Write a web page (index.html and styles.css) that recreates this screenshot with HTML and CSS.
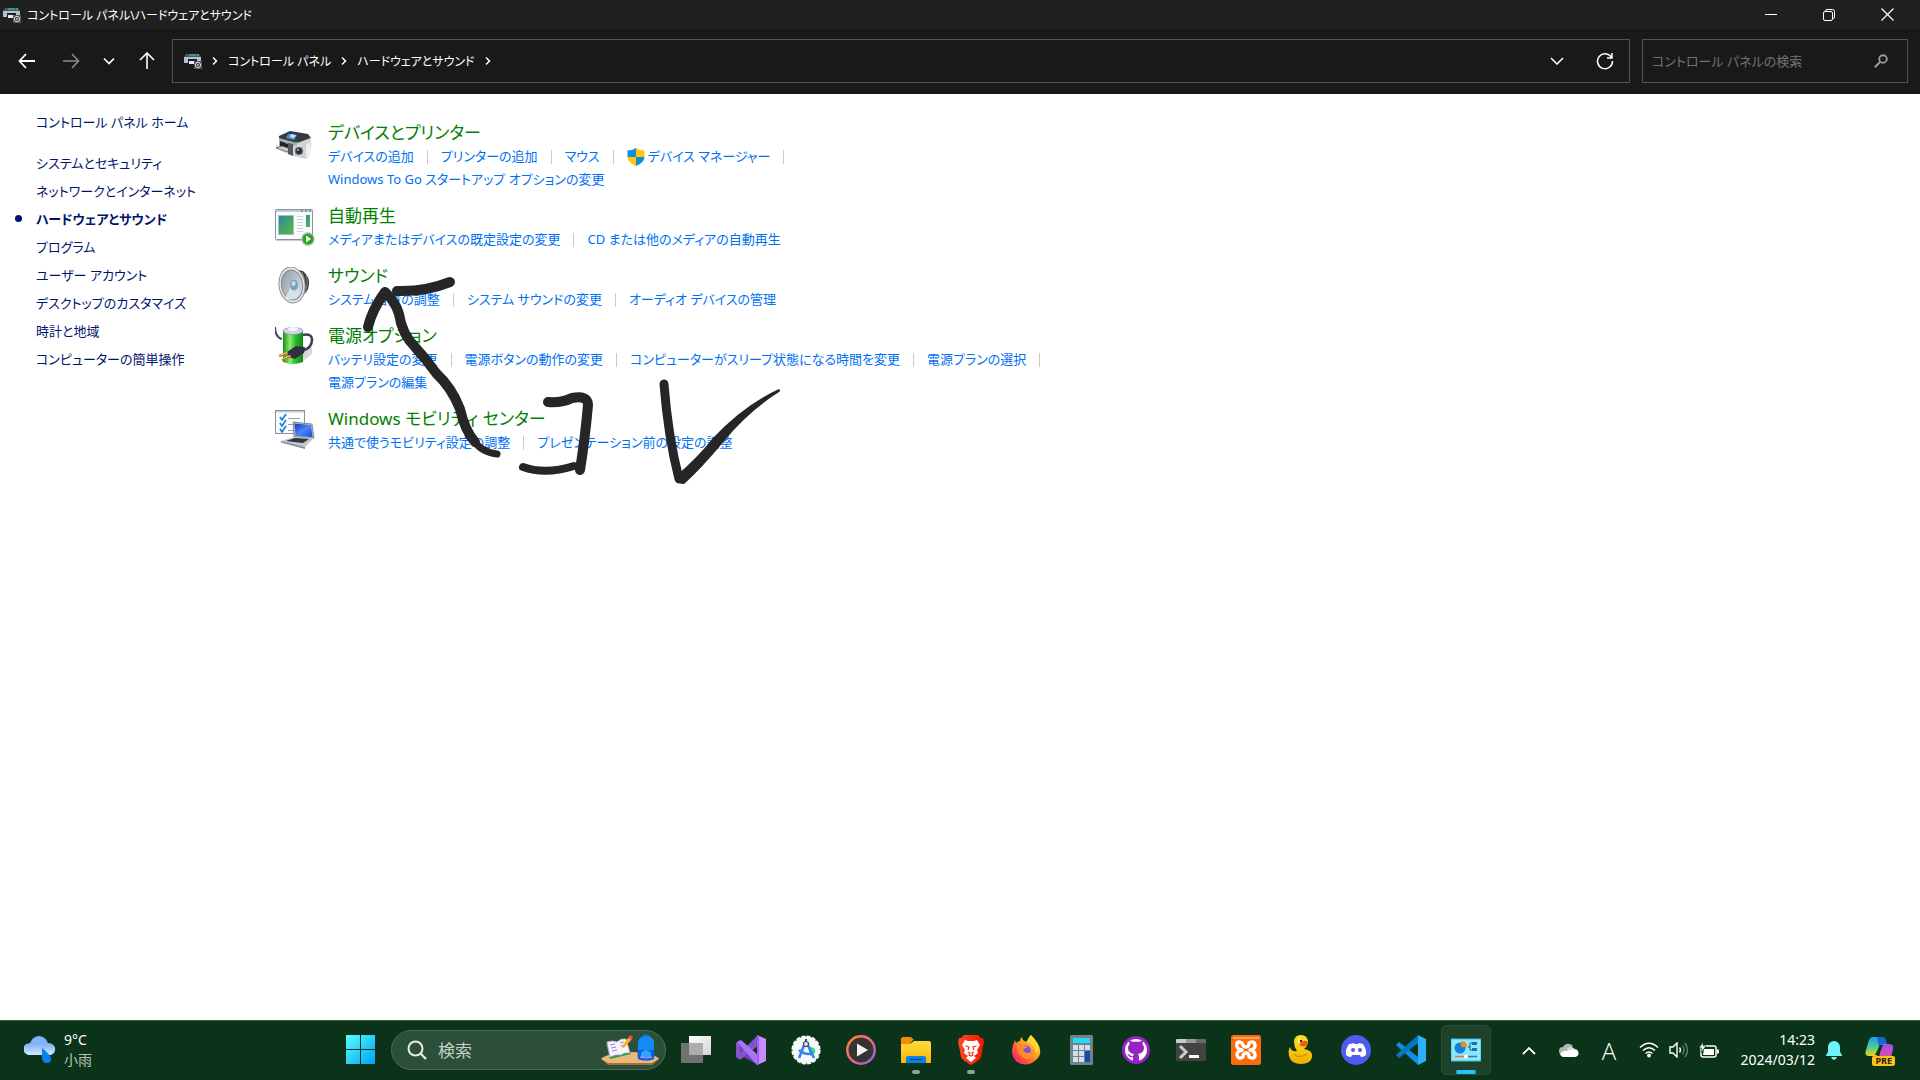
FILE: index.html
```html
<!DOCTYPE html>
<html lang="ja">
<head>
    <meta charset="UTF-8">
    <meta name="viewport" content="width=device-width, initial-scale=1.0">
    <title>コントロール パネル\ハードウェアとサウンド</title>

    <link rel="stylesheet" href="styles.css">
</head>

<body>
    <!-- 共通で使うグラデーションとアイコン -->
    <svg class="defs" width="0" height="0" aria-hidden="true">
      <defs>
        <linearGradient id="g-win" x1="0" y1="0" x2="1" y2="1"><stop offset="0" stop-color="#5ff"/><stop offset="1" stop-color="#00a2f5"/></linearGradient>
        <linearGradient id="g-screen" x1="0" y1="0" x2="1" y2="1"><stop offset="0" stop-color="#2c7fb0"/><stop offset="0.5" stop-color="#43a56b"/><stop offset="1" stop-color="#57b551"/></linearGradient>
        <linearGradient id="g-cone" x1="0" y1="0" x2="1" y2="1"><stop offset="0" stop-color="#8c979f"/><stop offset="1" stop-color="#e3e9ed"/></linearGradient>
        <linearGradient id="g-bat" x1="0" y1="0" x2="1" y2="0"><stop offset="0" stop-color="#168f16"/><stop offset="0.35" stop-color="#8dec6e"/><stop offset="0.6" stop-color="#2fc02f"/><stop offset="1" stop-color="#128612"/></linearGradient>
        <linearGradient id="g-lap" x1="0" y1="0" x2="1" y2="1"><stop offset="0" stop-color="#1534c4"/><stop offset="0.5" stop-color="#4a86f7"/><stop offset="1" stop-color="#1b45d8"/></linearGradient>
        <linearGradient id="g-cloud" x1="0" y1="0" x2="0" y2="1"><stop offset="0" stop-color="#79aef5"/><stop offset="1" stop-color="#d5e8ff"/></linearGradient>
        <linearGradient id="g-ring" x1="0" y1="0" x2="1" y2="1"><stop offset="0" stop-color="#ff8a1c"/><stop offset="0.5" stop-color="#ee6a86"/><stop offset="1" stop-color="#8d5ce0"/></linearGradient>
        <linearGradient id="g-dir" x1="0" y1="0" x2="0" y2="1"><stop offset="0" stop-color="#ffd93b"/><stop offset="1" stop-color="#fbb90a"/></linearGradient>
        <linearGradient id="g-fox" x1="1" y1="0" x2="0" y2="1"><stop offset="0" stop-color="#fff044"/><stop offset="0.45" stop-color="#ff9a22"/><stop offset="0.75" stop-color="#ff4048"/><stop offset="1" stop-color="#e8179b"/></linearGradient>
        <linearGradient id="g-brave" x1="0" y1="0" x2="1" y2="0"><stop offset="0" stop-color="#ff4a1f"/><stop offset="1" stop-color="#f51500"/></linearGradient>
        <linearGradient id="g-tv" x1="0" y1="0" x2="1" y2="1"><stop offset="0" stop-color="#fff"/><stop offset="1" stop-color="#d2d2d2"/></linearGradient>
        <linearGradient id="g-duck" x1="0" y1="0" x2="0" y2="1"><stop offset="0" stop-color="#ffdf22"/><stop offset="1" stop-color="#efb000"/></linearGradient>
        <linearGradient id="g-co1" x1="0" y1="0" x2="0" y2="1"><stop offset="0" stop-color="#1a9bf2"/><stop offset="0.55" stop-color="#4cd08a"/><stop offset="1" stop-color="#f4d01e"/></linearGradient>
        <linearGradient id="g-co2" x1="0" y1="0" x2="0" y2="1"><stop offset="0" stop-color="#a44df0"/><stop offset="1" stop-color="#f0508d"/></linearGradient>
        <symbol id="i-hard" viewBox="0 0 18 16">
          <path d="M2 1h13l2 3H0z" fill="#4d565d"/>
          <path d="M5 2h7" stroke="#35d69b" stroke-width="1"/>
          <path d="M13 2h2" stroke="#2f6" stroke-width="1"/>
          <path d="M0 4h17v6H0z" fill="#b6c0d2"/>
          <path d="M4 6h9v4H4z" fill="#1c2023"/>
          <path d="M5 8h6l1 3H5z" fill="#e6eaf2"/>
          <path d="M10 8h8v8h-8z" fill="#4f5a66"/>
          <circle cx="14" cy="12" r="2.6" fill="#2e3740" stroke="#dce3ea" stroke-width="1"/>
          <circle cx="14" cy="12" r="0.9" fill="#dce3ea"/>
        </symbol>
        <symbol id="i-chev" viewBox="0 0 6 10"><path d="M1 1.500l3.500 3.500L1 8.500" fill="none" stroke="#fff" stroke-width="1.500"/></symbol>
      </defs>
    </svg>

    <header class="title-bar">
      <svg class="title-icon"><use href="#i-hard"/></svg>
      <h1>コントロール パネル\ハードウェアとサウンド</h1>
      <div class="win-btns">
        <button type="button" aria-label="最小化"><svg width="12" height="12"><path d="M0 5.500h12" stroke="#fff"/></svg></button>
        <button type="button" aria-label="元に戻す"><svg width="12" height="12" fill="none" stroke="#fff"><rect x="0.500" y="2.500" width="9" height="9" rx="1.500"/><path d="M2.500 2.500V2A1.500 1.500 0 0 1 4 .5h5.500a2 2 0 0 1 2 2V8a1.500 1.500 0 0 1-1.500 1.500"/></svg></button>
        <button type="button" aria-label="閉じる"><svg width="13" height="13"><path d="M.5.5l12 12M12.500.5l-12 12" stroke="#fff" stroke-width="1.200"/></svg></button>
      </div>
    </header>

    <nav class="nav-bar">
      <div class="nav-btns">
        <button type="button" aria-label="戻る"><svg width="18" height="16" viewBox="0 0 18 16"><path d="M8 1L1.500 8 8 15M2 8h15" fill="none" stroke="#fff" stroke-width="1.800"/></svg></button>
        <button type="button" aria-label="進む"><svg width="18" height="16" viewBox="0 0 18 16"><path d="M10 1l6.500 7L10 15M16 8H1" fill="none" stroke="#8a8a8a" stroke-width="1.600"/></svg></button>
        <button type="button" class="small" aria-label="最近表示した場所"><svg width="12" height="8" viewBox="0 0 12 8"><path d="M1 1.500l5 5 5-5" fill="none" stroke="#fff" stroke-width="1.700"/></svg></button>
        <button type="button" aria-label="上へ"><svg width="16" height="17" viewBox="0 0 16 17"><path d="M1 8l7-7 7 7M8 1.500V17" fill="none" stroke="#fff" stroke-width="1.600"/></svg></button>
      </div>
      <div class="address">
        <svg class="addr-icon"><use href="#i-hard"/></svg>
        <svg class="chev"><use href="#i-chev"/></svg>
        <a href="#">コントロール パネル</a>
        <svg class="chev"><use href="#i-chev"/></svg>
        <a href="#">ハードウェアとサウンド</a>
        <svg class="chev"><use href="#i-chev"/></svg>
        <div class="addr-btns">
          <button type="button" aria-label="以前の場所"><svg width="14" height="8" viewBox="0 0 14 8"><path d="M1 1l6 6 6-6" fill="none" stroke="#fff" stroke-width="1.500"/></svg></button>
          <button type="button" aria-label="更新"><svg width="18" height="18" viewBox="0 0 18 18"><path d="M15.500 5.500A7.500 7.500 0 1 0 16.500 9M16 1v5h-5" fill="none" stroke="#fff" stroke-width="1.500"/></svg></button>
        </div>
      </div>
      <div class="search">
        <input type="text" aria-label="検索" placeholder="コントロール パネルの検索">
        <svg width="14" height="14" viewBox="0 0 14 14"><circle cx="9" cy="5" r="3.800" fill="none" stroke="#9a9a9a" stroke-width="1.900"/><path d="M6.300 7.700L.8 13.200" stroke="#9a9a9a" stroke-width="2"/></svg>
      </div>
    </nav>

    <main class="content">
      <aside class="side">
        <a class="home" href="#">コントロール パネル ホーム</a>
        <ul>
          <li><a href="#">システムとセキュリティ</a></li>
          <li><a href="#">ネットワークとインターネット</a></li>
          <li><a class="active" href="#">ハードウェアとサウンド</a></li>
          <li><a href="#">プログラム</a></li>
          <li><a href="#">ユーザー アカウント</a></li>
          <li><a href="#">デスクトップのカスタマイズ</a></li>
          <li><a href="#">時計と地域</a></li>
          <li><a href="#">コンピューターの簡単操作</a></li>
        </ul>
      </aside>

      <div class="list">
        <section class="item">
          <svg class="item-icon" viewBox="0 0 40 40">
            <path d="M1 20l8 5h12l15-3v3l-12 8-14-4-9-5z" fill="#000" opacity="0.120"/>
            <path d="M4 12L15 7l18 3 3 4-14 6L4 15z" fill="#343b42"/>
            <path d="M4 14l18 5v11L4 24z" fill="#a9aeb3"/>
            <path d="M22 19l14-5v9l-14 7z" fill="#d2d5d8"/>
            <path d="M13 10l9 1-3 5-8-2z" fill="#4b93d6"/>
            <path d="M16 10l5 1-2 3-4-1z" fill="#bde4fb"/>
            <path d="M5 17l11 4v6L5 22z" fill="#1e2226"/>
            <path d="M1 24l6-2 9 3-4 3z" fill="#c7cacd" stroke="#555" stroke-width="0.700"/>
            <path d="M13 19l5 1v12l-5-2z" fill="#54585c"/>
            <path d="M18 22l17-3v12l-4 4-13-3z" fill="#cfcfcd"/>
            <path d="M31 20l4-1v12l-4 3z" fill="#efefed"/>
            <circle cx="24" cy="27" r="5" fill="#777" stroke="#f4f4f4"/>
            <circle cx="24" cy="27" r="3" fill="#26313a"/>
            <circle cx="23" cy="26" r="1" fill="#a8c7dd"/>
            <path d="M20 18.500h3" stroke="#28c840" stroke-width="1.500"/>
          </svg>
          <div class="item-body">
            <h2><a href="#">デバイスとプリンター</a></h2>
            <ul>
              <li><a href="#">デバイスの追加</a></li>
              <li><a href="#">プリンターの追加</a></li>
              <li><a href="#">マウス</a></li>
              <li class="shield"><a href="#"><svg width="18" height="18" viewBox="0 0 18 18"><path d="M9 0Q5 2.500.5 2.500V9H9z" fill="#0f8ce0"/><path d="M9 0q4 2.500 8.500 2.500V9H9z" fill="#ffc90e"/><path d="M.5 9Q1 15 9 18V9z" fill="#ffc90e"/><path d="M17.500 9Q17 15 9 18V9z" fill="#0f8ce0"/></svg>デバイス マネージャー</a></li>
              <li class="new-line"></li>
              <li><a href="#">Windows To Go スタートアップ オプションの変更</a></li>
            </ul>
          </div>
        </section>

        <section class="item">
          <svg class="item-icon" viewBox="0 0 40 40">
            <rect x="0.500" y="2.500" width="37" height="30" rx="1" fill="#fafbfc" stroke="#8b929c"/>
            <path d="M1 3h36v2H1z" fill="#c4cbd3"/>
            <path d="M26 4h2M30 4h2M34 4h2" stroke="#59616c"/>
            <rect x="3.500" y="8.500" width="15" height="19" fill="url(#g-screen)" stroke="#a9c3b4"/>
            <path d="M22 9.500h6M22 12.500h6M22 15.500h6M22 18.500h6M22 21.500h6M22 24.500h6" stroke="#cdd2d8"/>
            <path d="M31 8h4v12h-4z" fill="url(#g-screen)"/>
            <path d="M1 33.500h36" stroke="#555" opacity="0.300"/>
            <circle cx="33" cy="32" r="6" fill="#1faa18" stroke="#a9b5a9" stroke-width="1.300"/>
            <path d="M31 28.500l5 3.500-5 3.500z" fill="#fff"/>
          </svg>
          <div class="item-body">
            <h2><a href="#">自動再生</a></h2>
            <ul>
              <li><a href="#">メディアまたはデバイスの既定設定の変更</a></li>
              <li><a href="#">CD または他のメディアの自動再生</a></li>
            </ul>
          </div>
        </section>

        <section class="item">
          <svg class="item-icon" viewBox="0 0 40 40">
            <path d="M18 2l10 2q7 6 6 14-1 8-8 11l-8 3z" fill="#3d4044"/>
            <path d="M27 5q5 12 0 23M31 8q3 9-1 18" fill="none" stroke="#7b8086"/>
            <ellipse cx="17" cy="18" rx="13" ry="18" fill="#e4e6e8" stroke="#8f9499" transform="rotate(-8 17 18)"/>
            <ellipse cx="17" cy="18" rx="10.500" ry="15" fill="url(#g-cone)" stroke="#84898e" transform="rotate(-8 17 18)"/>
            <path d="M17 18L10 31q10 5 15-6z" fill="#d9e2e8"/>
            <ellipse cx="19" cy="18" rx="4" ry="5.500" fill="#77a3bd"/>
            <ellipse cx="18.500" cy="16.500" rx="2" ry="2.500" fill="#c9e1ee"/>
          </svg>
          <div class="item-body">
            <h2><a href="#">サウンド</a></h2>
            <ul>
              <li><a href="#">システム音量の調整</a></li>
              <li><a href="#">システム サウンドの変更</a></li>
              <li><a href="#">オーディオ デバイスの管理</a></li>
            </ul>
          </div>
        </section>

        <section class="item">
          <svg class="item-icon" viewBox="0 0 40 40">
            <path d="M26 36l11-9V20l-8 2z" fill="#000" opacity="0.150"/>
            <path d="M0 0q0 10 7 12" fill="none" stroke="#474766" stroke-width="2"/>
            <path d="M8 4h20v31q-10 4-20 0z" fill="url(#g-bat)"/>
            <ellipse cx="18" cy="4" rx="10" ry="3.500" fill="#ced7e8" stroke="#7790a0" stroke-width="0.700"/>
            <ellipse cx="18" cy="2" rx="5" ry="2" fill="#f1f5fc"/>
            <path d="M28 8q9-2 9 5 0 8-10 11" fill="none" stroke="#3b3b5a" stroke-width="2.500"/>
            <path d="M12 25l9-6 9 1-1 6-9 6-7-2z" fill="#303044"/>
            <path d="M13 26l-9 3M16 29l-9 4" stroke="#b8792f" stroke-width="2.600"/>
            <path d="M12 25.500l-8 3M15 28.500l-8 3.500" stroke="#ffdf9c" stroke-width="0.800"/>
          </svg>
          <div class="item-body">
            <h2><a href="#">電源オプション</a></h2>
            <ul>
              <li><a href="#">バッテリ設定の変更</a></li>
              <li><a href="#">電源ボタンの動作の変更</a></li>
              <li><a href="#">コンピューターがスリープ状態になる時間を変更</a></li>
              <li><a href="#">電源プランの選択</a></li>
              <li class="new-line"></li>
              <li><a href="#">電源プランの編集</a></li>
            </ul>
          </div>
        </section>

        <section class="item">
          <svg class="item-icon" viewBox="0 0 40 40">
            <rect x="0.500" y="0.500" width="29" height="23" fill="#fbfcfd" stroke="#8b929c"/>
            <path d="M1 1h28v1.500H1z" fill="#c4cbd3"/>
            <path d="M13 8.500h12M13 14.500h12M13 20.500h10" stroke="#9aa2ad"/>
            <path d="M5 7l2 3 4-6M5 13l2 3 4-6M5 19l2 3 4-6" fill="none" stroke="#1a86e0" stroke-width="1.800"/>
            <path d="M18 12l19 2 2 14-20-1z" fill="#b9c1cc" stroke="#5e6773" stroke-width="0.700"/>
            <path d="M19.500 13.500L36 15l1.500 12-17-1z" fill="url(#g-lap)"/>
            <path d="M6 31l13-4 20 1-9 9z" fill="#c0c6ce"/>
            <path d="M11 31l9-3 14 1-6 4z" fill="#30363e"/>
            <path d="M6 31l24 6v2L6 32.500z" fill="#828a94"/>
          </svg>
          <div class="item-body">
            <h2><a href="#">Windows モビリティ センター</a></h2>
            <ul>
              <li><a href="#">共通で使うモビリティ設定の調整</a></li>
              <li><a href="#">プレゼンテーション前の設定の調整</a></li>
            </ul>
          </div>
        </section>
      </div>

      <!-- 手書きのメモ -->
      <svg class="pen" width="430" height="230" viewBox="360 270 430 230" aria-hidden="true">
        <g fill="none" stroke="#262626" stroke-width="10" stroke-linecap="round" stroke-linejoin="round">
          <path d="M368 327q4-17 17-35 10 9 14 22 3 20 16 33 12 13 21 26 16 15 24 36 5 22 15 33"/>
          <path d="M472 438q8 14 25 16" stroke-width="7"/>
          <path d="M397 291q28 1 53-9"/>
          <path d="M548 402q14 1 24-4 16-3 16 7-3 34-8 65"/>
          <path d="M523 467q22 8 51-1" stroke-width="8"/>
          <path d="M664 384q4 52 15 95" stroke-width="9"/>
        </g>
        <path d="M676 476q22-19 37-38 31-33 66-49 2 2 0 3-30 19-54 48-24 29-41 44-7 1-8-8z" fill="#262626"/>
      </svg>
    </main>

    <footer class="taskbar">
      <button type="button" class="weather">
        <svg width="32" height="30" viewBox="0 0 32 30">
          <circle cx="15" cy="10" r="9" fill="#84b2f8"/>
          <path d="M7 20a7 6 0 1 1 3-11 8 8 0 0 1 10 2 6 6 0 1 1 4 9z" fill="url(#g-cloud)"/>
          <path d="M18 13q9 7 9 11a4 4 0 0 1-4 4q-5 0-5-5z" fill="#0b80ee"/>
        </svg>
        <span><b>9°C</b><br>小雨</span>
      </button>

      <div class="apps">
        <button type="button" aria-label="スタート"><svg viewBox="0 0 30 30"><path d="M0 0h14v14H0zM15 0h14v14H15zM0 15h14v14H0zM15 15h14v14H15z" fill="url(#g-win)"/></svg></button>
        <div class="task-search">
          <svg width="20" height="20" viewBox="0 0 20 20"><circle cx="8.500" cy="8.500" r="7" fill="none" stroke="#e6ece8" stroke-width="2"/><path d="M13.500 13.500l5.500 5.500" stroke="#e6ece8" stroke-width="2.400"/></svg>
          <input type="text" aria-label="タスクバーの検索" placeholder="検索">
          <svg class="deco" width="58" height="32" viewBox="0 0 58 32">
            <path d="M0 25q8-7 30-7 22 0 28 7l-7 5H7z" fill="#eab87a"/>
            <path d="M0 25l7 4h44l7-4-7 6H7z" fill="#a96d36"/>
            <path d="M5 10l20-5 5 15-21 5z" fill="#21a045"/>
            <path d="M6 8q6-2 10 0 4-4 9-3l4 14q-6-1-9 2-5-1-11 2z" fill="#f7f2ff" stroke="#c1a3e6" stroke-width="0.700"/>
            <path d="M9 11l5-1M10 14l5-1M11 17l5-1M19 9l4-1M20 12l4-1" stroke="#9d88b0"/>
            <path d="M20 13l8-10 3 2-8 9z" fill="#ffb01e"/><path d="M27 4l2-3 3 2-1.500 3z" fill="#f2483d"/>
            <path d="M42 3q3-4 6 0" fill="none" stroke="#1468df" stroke-width="2"/>
            <path d="M37 10q0-8 8-8t8 8v15q-8 3-16 0z" fill="#158bf5"/>
            <path d="M37 16q-1 5 0 9 8 3 16 0 1-4 0-9" fill="#0b61dc"/>
            <path d="M40 19q5-6 10 0v4H40z" fill="#2fa5ff"/><path d="M39 23q6 2 12 0" stroke="#e690ff" fill="none"/>
          </svg>
        </div>
        <button type="button" aria-label="タスク ビュー"><svg viewBox="0 0 30 30"><path d="M0 8h22v20H0z" fill="#727272"/><path d="M8 1h22v19H8z" fill="url(#g-tv)"/><path d="M8 8h14v12H8z" fill="#adadad"/></svg></button>
        <button type="button" aria-label="Visual Studio"><svg viewBox="0 0 30 30"><path d="M0 8l4-3 18 15v10L4 20z" fill="#6f3fb5"/><path d="M0 8l4-2v18l-4-2z" fill="#8554d2"/><path d="M0 22L22 0l1 10L4 25z" fill="#8252ce"/><path d="M1 7l4-2 17 15-1 10z" fill="#a974f4"/><path d="M21 0l9 4v22l-9 4z" fill="#c98bfb"/><path d="M21 0l2 1v28l-2 1z" fill="#a05cea"/></svg></button>
        <button type="button" aria-label="Android Studio"><svg viewBox="0 0 30 30"><circle cx="15" cy="15" r="13.500" fill="#f7f9f9"/><circle cx="15" cy="15" r="13.700" fill="none" stroke="#f7f9f9" stroke-width="1.800" stroke-dasharray="4 1.400"/><path d="M17 12q9-1 7 6l-5 3z" fill="#3ddc84"/><path d="M14 8L8 23M16 8l7 15M8 15q7 6 14 3" fill="none" stroke="#3b82ee" stroke-width="2.700"/><circle cx="15" cy="9" r="2.500" fill="#dfe7ee" stroke="#31506c" stroke-width="1.200"/><path d="M15 4v3" stroke="#31506c" stroke-width="2"/></svg></button>
        <button type="button" aria-label="メディア プレーヤー"><svg viewBox="0 0 30 30"><circle cx="15" cy="15" r="13.700" fill="#343434" stroke="url(#g-ring)" stroke-width="2.500"/><path d="M11 8.500L22 15l-11 6.500z" fill="#f2f2f2"/></svg></button>
        <button type="button" class="running" aria-label="エクスプローラー"><svg viewBox="0 0 30 30"><path d="M0 4q0-2 2-2h8l3 3h-1l-3 4H0z" fill="#f08f00"/><path d="M0 9h9l4-3h15q2 0 2 2v20H0z" fill="url(#g-dir)"/><path d="M5 28v-5q0-2 2-2h16q2 0 2 2v5z" fill="#0a83e6"/><path d="M9 24.500h12" stroke="#07469f" stroke-width="1.400"/></svg></button>
        <button type="button" class="running" aria-label="Brave"><svg viewBox="0 0 30 30"><path d="M8 0h14l3 3 2 0 1 5-1 3-2 11q-1 3-10 8Q6 25 5 22L3 11 2 8l1-5h2z" fill="url(#g-brave)"/><path d="M9 5l3 1h6l3-1 3 5-3 5 1 3-4 3 2 2-5 4-5-4 2-2-4-3 1-3-3-5z" fill="#fff"/><path d="M9.500 11l3.500 1-1 3M20.500 11L17 12l1 3M12 17l2 1-1 2 2 1 2-1-1-2 2-1" fill="none" stroke="#fb3211" stroke-width="1.200"/></svg></button>
        <button type="button" aria-label="Firefox"><svg viewBox="0 0 30 30"><path d="M4 5l1 3q2-2 4-2 0-3 2-4 0 4 5 5 1-5 4-7 1 5 4 7l1 2 1-2q7 11-1 18-9 8-19 2Q-3 19 4 5z" fill="url(#g-fox)"/><circle cx="14" cy="16" r="6" fill="#814af0"/><path d="M6 9q3-1 6 1l5 1q-2 3-5 3 1 4 5 4 4-1 6-4 1 10-8 10-9-2-9-15z" fill="#ff8d27"/><path d="M15 7q3-2 5-7 7 6 8 15-3 6-4 0-2-7-9-8z" fill="#ffd82e"/></svg></button>
        <button type="button" aria-label="電卓"><svg viewBox="0 0 30 30"><rect x="4" width="23" height="30" rx="1.500" fill="#73808d"/><path d="M7 3h17v5H7z" fill="#1fdcf5"/><path d="M7 10h5v5H7zM13 10h5v5h-5zM19 10h5v5h-5zM7 16h5v5H7zM13 16h5v5h-5zM7 22h5v5H7zM13 22h5v5h-5z" fill="#d5dfe9"/><path d="M19 16h5v11h-5z" fill="#0f4da8"/></svg></button>
        <button type="button" aria-label="GitHub Desktop"><svg viewBox="0 0 30 30"><circle cx="15" cy="15" r="14" fill="#9723c4"/><circle cx="15" cy="15" r="11" fill="#fff"/><path d="M12 27v-5q-3 1-4-1l-2-2q2 0 3 1 1 2 3 1l1-2q-6-1-6-6 0-2 1.500-4-.5-2 0-3.500 2 0 3.500 1.500 3-1 6 0 1.500-1.500 3.500-1.500.5 2 0 3.500 1.500 2 1.500 4 0 5-6 6 1 1 1 3v5z" fill="#9723c4"/></svg></button>
        <button type="button" aria-label="ターミナル"><svg viewBox="0 0 30 30"><rect y="4" width="30" height="22" rx="1.500" fill="#434343"/><path d="M0 8V5q0-1 1-1h9v4z" fill="#c9c9c9"/><path d="M10 4h10v4H10z" fill="#999"/><path d="M20 4h9q1 0 1 1v3H20z" fill="#6b6b6b"/><path d="M4 11l6 6-6 6" fill="none" stroke="#cacaca" stroke-width="3"/><path d="M13 21.500h10" stroke="#fff" stroke-width="3"/></svg></button>
        <button type="button" aria-label="XAMPP"><svg viewBox="0 0 30 30"><rect width="30" height="30" rx="2.500" fill="#fb6a0b"/><path d="M2 2h26v2H2z" fill="#ffa361"/><path d="M11 8q-6-3-5 3 0 3 5 4-5 1-5 5 1 5 6 2 0-4 3-4t3 4q6 3 6-2 0-4-5-5 5-1 5-4 0-6-6-3 0 4-3 4t-4-4z" fill="none" stroke="#fff" stroke-width="3.400" stroke-linejoin="round"/></svg></button>
        <button type="button" aria-label="Cyberduck"><svg viewBox="0 0 30 30"><path d="M8 7q0-7 7-7 6 0 7 6 0 5-4 8 9 1 8 8-1 7-11 7T3 21q-1-6 1-9 1 5 7 4-3-4-3-9z" fill="url(#g-duck)"/><circle cx="14" cy="6" r="2.500" fill="#fff0b0"/><circle cx="15" cy="6" r="1.200" fill="#332200"/><path d="M15 7q5-3 7 1-1 5-7 3-3-1 0-4z" fill="#f05a12"/><path d="M8 19q4 5 13 0" fill="none" stroke="#d99800" stroke-width="1.500"/></svg></button>
        <button type="button" aria-label="Discord"><svg viewBox="0 0 30 30"><circle cx="15" cy="15" r="15" fill="#505cf0"/><path d="M9 9l4-1 1 1h3l1-1 4 1q4 6 3 11-2 2-5 2l-1-2h-8l-1 2q-3 0-5-2-1-5 3-11z" fill="#fff"/><circle cx="12" cy="15" r="2" fill="#505cf0"/><circle cx="19" cy="15" r="2" fill="#505cf0"/></svg></button>
        <button type="button" aria-label="Visual Studio Code"><svg viewBox="0 0 30 30"><path d="M0 10l3-3 19 15v8z" fill="#118edc"/><path d="M0 20l3 3L22 8V0z" fill="#0874c4"/><path d="M22 0l8 4v22l-8 4z" fill="#2ab1fb"/></svg></button>
        <button type="button" class="current" aria-label="コントロール パネル"><svg viewBox="0 0 30 30"><rect y="4" width="30" height="22" fill="#8ce7fb" stroke="#38bdf0"/><circle cx="9" cy="13" r="5.500" fill="#0f83d8"/><path d="M10 12V6q6 0 6 6z" fill="#f58a1d"/><path d="M17 12h2V8h2M19 12v3h2" fill="none" stroke="#12639c"/><path d="M21 7h5v3h-5zM21 13h5v3h-5z" fill="#1272c4"/><path d="M4 21.500h11" stroke="#e8781b" stroke-width="1.500"/><path d="M15 21.500h11" stroke="#237eb5" stroke-width="1.500"/><circle cx="15" cy="21.500" r="2" fill="#fff"/></svg></button>
      </div>

      <div class="tray">
        <button type="button" aria-label="隠れているインジケーター"><svg width="14" height="9" viewBox="0 0 14 9"><path d="M1 8l6-6 6 6" fill="none" stroke="#fff" stroke-width="1.800"/></svg></button>
        <button type="button" aria-label="OneDrive"><svg width="20" height="14" viewBox="0 0 20 14"><path d="M4 12a4 4 0 0 1 0-8 6 6 0 0 1 10-1l-6 7z" fill="#aab8b0"/><path d="M8 5a6 6 0 0 1 8 1 4 4 0 0 1 3 2L9 9z" fill="#d3dbd6"/><path d="M1 11q3-4 7-3 5-3 11 0 2 5-3 6H4q-2 0-3-3z" fill="#fff"/></svg></button>
        <button type="button" class="ime" aria-label="入力モード">A</button>
        <button type="button" class="status" aria-label="ネットワーク、音量、バッテリ">
          <svg width="20" height="16" viewBox="0 0 20 16"><path d="M1 5.500q9-8.500 18 0M4 8.500q6-5.500 12 0M6.500 11.500q3.500-3 7 0" fill="none" stroke="#fff" stroke-width="1.500"/><circle cx="10" cy="13.500" r="1.900" fill="#fff"/></svg>
          <svg width="20" height="16" viewBox="0 0 20 16"><path d="M1 5h3l4-4v14l-4-4H1z" fill="none" stroke="#fff" stroke-width="1.400"/><path d="M10.500 5.500q2 2.500 0 5" fill="none" stroke="#fff" stroke-width="1.400"/><path d="M13.500 3.500q3 4.500 0 9M16 1q5 7 0 14" fill="none" stroke="#6c8272" stroke-width="1.300"/></svg>
          <svg width="20" height="16" viewBox="0 0 20 16"><rect x="2" y="4" width="15" height="11" rx="2" fill="none" stroke="#fff" stroke-width="1.500"/><path d="M5 7h10v6H4z" fill="#fff"/><path d="M18 7v5l2-1V8z" fill="#fff"/><path d="M4 0L0 6h3l-1 5 5-7H4z" fill="#fff" stroke="#0a3319" stroke-width="0.600"/></svg>
        </button>
        <button type="button" class="clock">
          <span>14:23<br>2024/03/12</span>
          <svg width="18" height="20" viewBox="0 0 18 20"><path d="M9 1a6 6 0 0 1 6 6v5l2 3v1H1v-1l2-3V7a6 6 0 0 1 6-6z" fill="#6ff2fc"/><path d="M6 17h6q-1 3-3 3t-3-3z" fill="#6ff2fc"/></svg>
        </button>
        <button type="button" class="copilot" aria-label="Copilot">
          <svg width="30" height="28" viewBox="0 0 30 28"><path d="M8 1h9q3 0 2 3l-5 13q-1 3-4 3H4q-5 0-3-6L4 4q1-3 4-3z" fill="url(#g-co1)"/><path d="M16 8h8q5 0 4 5l-2 9q-1 4-5 4H11l3-3z" fill="url(#g-co2)"/><path d="M12 1h5q3 0 4 3l1 4h-5q-2 0-3 3z" fill="#1665dc"/><path d="M15 9h3l-4 10h-4z" fill="#0a3319"/></svg>
          <span>PRE</span>
        </button>
      </div>
    </footer>
</body>
</html>
```
FILE: styles.css
```css
* {
  margin: 0;
  padding: 0;
  box-sizing: border-box;
}

body {
  display: flex;
  flex-direction: column;
  min-height: 100vh;
  font-family: "Noto Sans", "Noto Sans CJK JP", sans-serif;
  font-feature-settings: "palt";
  font-size: 13px;
  background-color: #fff;
}

ul {
  list-style: none;
}

a {
  text-decoration: none;
  color: inherit;
}

button,
input {
  border: 0;
  outline: 0;
  background: none;
  color: inherit;
  font: inherit;
  font-feature-settings: inherit;
}

svg {
  display: block;
  flex-shrink: 0;
}

.defs {
  position: absolute;
}

/* タイトルバー */
.title-bar {
  display: flex;
  align-items: center;
  height: 29px;
  padding-left: 3px;
  color: #fff;
  background-color: #202020;
}

.title-icon,
.addr-icon {
  width: 18px;
  height: 16px;
}

.title-bar h1 {
  margin-left: 6px;
  font-size: 12px;
  font-weight: normal;
}

.win-btns {
  display: flex;
  margin-left: auto;
  padding-right: 4px;
}

.win-btns button {
  display: flex;
  align-items: center;
  justify-content: center;
  width: 58px;
  height: 29px;
}

/* アドレスバー */
.nav-bar {
  display: flex;
  align-items: center;
  height: 65px;
  padding: 0 12px 2px 5px;
  color: #fff;
  background-color: #191919;
}

.nav-btns {
  display: flex;
  width: 167px;
}

.nav-btns button {
  display: flex;
  align-items: center;
  justify-content: center;
  width: 44px;
  height: 40px;
}

.nav-btns .small {
  width: 32px;
}

.address {
  flex: 1;
  display: flex;
  align-items: center;
  gap: 10px;
  height: 44px;
  padding-left: 11px;
  border: 1px solid #535353;
  font-size: 12px;
}

.chev {
  width: 6px;
  height: 10px;
}

.addr-btns {
  display: flex;
  margin-left: auto;
}

.addr-btns button {
  display: flex;
  align-items: center;
  justify-content: center;
  width: 48px;
  height: 42px;
}

.search {
  display: flex;
  align-items: center;
  width: 266px;
  height: 44px;
  margin-left: 12px;
  padding: 0 19px 0 9px;
  border: 1px solid #535353;
}

.search input {
  flex: 1;
  min-width: 0;
}

.search input::placeholder {
  color: #737373;
}

/* 本文 */
.content {
  flex: 1;
  display: flex;
  position: relative;
}

.side {
  width: 274px;
  padding: 14px 0 0 36px;
  line-height: 28px;
  color: #00146e;
}

.home {
  display: block;
  margin-bottom: 13px;
}

.side .active {
  display: block;
  font-weight: bold;
}

.side .active::before {
  content: "";
  float: left;
  width: 7px;
  height: 7px;
  margin: 10px 0 0 -21px;
  border-radius: 50%;
  background-color: #00146e;
}

.list {
  flex: 1;
  padding-top: 27px;
}

.item {
  display: flex;
  margin-bottom: 13px;
}

.item-icon {
  width: 40px;
  height: 40px;
  margin: 3px 13px 0 1px;
}

.item h2 {
  font-size: 17px;
  line-height: 24px;
  font-weight: normal;
  color: #008000;
}

.item ul {
  display: flex;
  flex-wrap: wrap;
}

.item li {
  display: flex;
  align-items: center;
  line-height: 23px;
  color: #0070f5;
}

.item li:not(:last-child)::after {
  content: "";
  width: 1px;
  height: 14px;
  margin: 0 13px;
  background-color: #ccc;
}

.item li.new-line {
  width: 100%;
}

.item li.new-line::after {
  display: none;
}

.shield a {
  display: flex;
  align-items: center;
  gap: 3px;
}

.pen {
  position: absolute;
  left: 360px;
  top: 176px;
  pointer-events: none;
}

/* タスクバー */
.taskbar {
  display: flex;
  align-items: center;
  height: 60px;
  padding-bottom: 1px;
  color: #fff;
  background-color: #0a3319;
  border-top: 1px solid #3a5945;
}

.weather {
  display: flex;
  align-items: center;
  gap: 8px;
  width: 336px;
  padding-left: 24px;
  font-size: 14px;
  line-height: 20px;
  text-align: left;
  color: #b9c6bd;
}

.weather b {
  font-weight: normal;
  color: #fff;
}

.apps {
  display: flex;
  align-items: center;
  gap: 5px;
}

.apps button {
  display: flex;
  align-items: center;
  justify-content: center;
  position: relative;
  width: 50px;
  height: 50px;
  border-radius: 5px;
}

.apps button svg {
  width: 30px;
  height: 30px;
}

.apps .running::after,
.apps .current::after {
  content: "";
  position: absolute;
  left: 21px;
  bottom: 1px;
  width: 8px;
  height: 4px;
  border-radius: 2px;
  background-color: #8ea596;
}

.apps .current {
  background-color: #1d4229;
  border: 1px solid #2b4e37;
}

.apps .current::after {
  left: 14px;
  bottom: 0;
  width: 20px;
  background-color: #22c4f5;
}

.task-search {
  display: flex;
  align-items: center;
  width: 275px;
  height: 40px;
  padding: 0 6px 0 15px;
  border: 1px solid #4b6b56;
  border-radius: 20px;
  background-color: #2b4f39;
}

.task-search input {
  flex: 1;
  min-width: 0;
  margin-left: 11px;
  font-size: 17px;
}

.task-search input::placeholder {
  color: #c3cfc7;
}

.tray {
  display: flex;
  align-items: center;
  margin-left: auto;
  padding-right: 25px;
}

.tray button {
  display: flex;
  align-items: center;
  justify-content: center;
  width: 40px;
  height: 50px;
}

.tray .ime {
  font-family: "Open Sans", sans-serif;
  font-size: 24px;
  font-weight: 300;
}

.tray .status {
  gap: 10px;
  width: 100px;
}

.tray .clock {
  gap: 10px;
  width: 114px;
  justify-content: flex-end;
  font-size: 14px;
  line-height: 20px;
  text-align: right;
}

.tray .copilot {
  position: relative;
  width: 52px;
  justify-content: flex-end;
}

.copilot span {
  position: absolute;
  right: 0;
  bottom: 9px;
  padding: 0 3px;
  border-radius: 2px;
  font-size: 9px;
  line-height: 10px;
  font-weight: bold;
  color: #222;
  background-color: #fcc111;
}
```
